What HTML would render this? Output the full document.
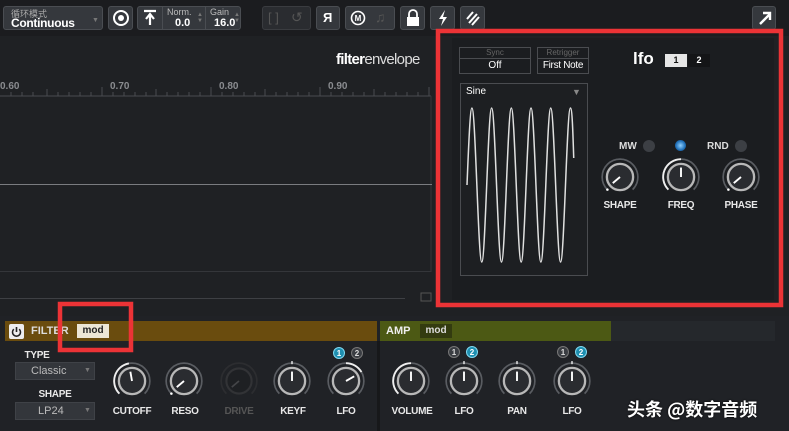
<!DOCTYPE html>
<html><head><meta charset="utf-8"><style>
*{box-sizing:border-box;margin:0;padding:0}
body{width:789px;height:431px;overflow:hidden;background:#1f2124;font-family:"Liberation Sans","Noto Sans CJK SC",sans-serif;position:relative;color:#ddd}
.a{position:absolute}
.tb{left:0;top:0;width:789px;height:36px;background:#1b1c1f}
.btn{position:absolute;top:6px;height:24px;background:#35383d;border:1px solid #4a4d52;border-radius:3px}
.dim{background:#2a2c30;border-color:#3a3c40}
.main{left:0;top:36px;width:789px;height:280px;background:#1f2124}
.lbl{font-weight:bold;font-size:10px;color:#e8e8e8;text-align:center;width:60px;letter-spacing:-0.3px}
.ax{font-size:10px;color:#8a8c90;font-weight:bold;top:81px}
</style></head><body>
<div class="a tb"></div>
<div class="btn" style="left:3px;width:100px">
 <div class="a" style="left:7px;top:0;font-size:9px;color:#aaa">循环模式</div>
 <div class="a" style="left:7px;top:9px;font-size:12px;font-weight:bold;color:#fff;letter-spacing:-0.3px">Continuous</div>
 <div class="a" style="left:88px;top:10px;font-size:7px;color:#777">▼</div>
</div>
<div class="btn" style="left:108px;width:25px"><svg class="a" style="left:3px;top:2px" width="18" height="18"><circle cx="9" cy="9" r="7" fill="none" stroke="#fff" stroke-width="2"/><circle cx="9" cy="9" r="3" fill="#fff"/></svg></div>
<div class="btn" style="left:137px;width:104px">
 <svg class="a" style="left:3px;top:2px" width="18" height="18"><path d="M3 2H15M9 16V6M5 10L9 5L13 10" stroke="#fff" stroke-width="2.2" fill="none"/></svg>
 <div class="a" style="left:24px;top:0;width:1px;height:22px;background:#4a4d52"></div>
 <div class="a" style="left:29px;top:0;font-size:9px;color:#bbb">Norm.</div>
 <div class="a" style="left:37px;top:10px;font-size:11px;font-weight:bold;color:#fff">0.0</div>
 <div class="a" style="left:59px;top:5px;font-size:6px;color:#777;line-height:6px">▲<br>▼</div>
 <div class="a" style="left:67px;top:0;width:1px;height:22px;background:#4a4d52"></div>
 <div class="a" style="left:72px;top:0;font-size:9px;color:#bbb">Gain</div>
 <div class="a" style="left:76px;top:10px;font-size:11px;font-weight:bold;color:#fff">16.0</div>
 <div class="a" style="left:96px;top:5px;font-size:6px;color:#777;line-height:6px">▲<br>▼</div>
</div>
<div class="btn dim" style="left:262px;width:49px"><div class="a" style="left:5px;top:3px;font-size:13px;color:#555">[ ]</div><div class="a" style="left:28px;top:2px;font-size:14px;color:#555">↺</div></div>
<div class="btn" style="left:316px;width:24px"><div class="a" style="left:6px;top:3px;font-size:13px;font-weight:bold;color:#fff">Я</div></div>
<div class="btn" style="left:345px;width:50px"><svg class="a" style="left:3px;top:2px" width="18" height="18"><circle cx="9" cy="9" r="6.5" fill="none" stroke="#fff" stroke-width="1.6"/><text x="9" y="12" font-size="8" font-weight="bold" fill="#fff" text-anchor="middle" font-family="Liberation Sans">M</text></svg><div class="a" style="left:29px;top:2px;font-size:14px;color:#555">♫</div></div>
<div class="btn" style="left:400px;width:25px"><svg class="a" style="left:4px;top:2px" width="16" height="18"><path d="M4 8V5a4 4 0 0 1 8 0v3" stroke="#fff" stroke-width="1.8" fill="none"/><rect x="2" y="8" width="12" height="9" fill="#fff"/></svg></div>
<div class="btn" style="left:430px;width:25px"><svg class="a" style="left:4px;top:2px" width="16" height="18"><path d="M10 1L4 10H8L6 17L12 8H8Z" fill="#fff"/></svg></div>
<div class="btn" style="left:460px;width:25px"><svg class="a" style="left:3px;top:2px" width="18" height="18"><path d="M3 10L9 3M5 14L13 5M8 16L15 8" stroke="#fff" stroke-width="2"/></svg></div>
<div class="btn" style="left:752px;width:24px"><svg class="a" style="left:3px;top:2px" width="18" height="18"><path d="M4 15L14 5M7 4H14V11" stroke="#fff" stroke-width="2.4" fill="none"/></svg></div>

<div class="a main"></div>
<div class="a" style="left:336px;top:51px;font-size:15px;color:#fff;letter-spacing:-0.7px"><b>filter</b><span style="color:#ddd">envelope</span></div>
<div class="a ax" style="left:0">0.60</div>
<div class="a ax" style="left:110px">0.70</div>
<div class="a ax" style="left:219px">0.80</div>
<div class="a ax" style="left:328px">0.90</div>
<svg class="a" style="left:0;top:85px" width="440" height="220">
 <g stroke="#4a4c50" stroke-width="1">
 <path d="M0 11H431 M47 4V11 M156 4V11 M265 4V11 M374 4V11 M102 2V11 M211 2V11 M320 2V11 M429 2V11"/>
 <path d="M11 7V11M22 7V11M33 7V11M58 7V11M69 7V11M80 7V11M91 7V11M113 7V11M124 7V11M135 7V11M146 7V11M167 7V11M178 7V11M189 7V11M200 7V11M222 7V11M233 7V11M244 7V11M255 7V11M276 7V11M287 7V11M298 7V11M309 7V11M331 7V11M342 7V11M353 7V11M364 7V11M385 7V11M396 7V11M407 7V11M418 7V11"/>
 <rect x="-1" y="11.5" width="432" height="175" fill="none" stroke="#34363a"/>
 <path d="M0 213.5H405" stroke="#3e4044"/>
 </g>
 <path d="M0 99.5H432" stroke="#7a7c80"/>
 <rect x="421" y="208" width="10" height="8" fill="none" stroke="#555"/>
</svg>

<div class="a" style="left:452px;top:38px;width:322px;height:262px;background:#1b1d20"></div>
<div class="a" style="left:459px;top:47px;width:72px;height:27px;border:1px solid #4a4c50;background:#1b1d20"><div style="height:11px;border-bottom:1px solid #4a4c50;font-size:8px;color:#666;text-align:center;line-height:10px">Sync</div><div style="font-size:10px;color:#fff;text-align:center;line-height:14px">Off</div></div>
<div class="a" style="left:537px;top:47px;width:52px;height:27px;border:1px solid #4a4c50;background:#1b1d20"><div style="height:11px;border-bottom:1px solid #4a4c50;font-size:8px;color:#666;text-align:center;line-height:10px">Retrigger</div><div style="font-size:10px;color:#fff;text-align:center;line-height:14px;white-space:nowrap;letter-spacing:-0.3px">First Note</div></div>
<div class="a" style="left:633px;top:49px;font-size:17px;font-weight:bold;color:#fff">lfo</div>
<div class="a" style="left:665px;top:54px;width:22px;height:13px;background:#e6e6e6;color:#111;font-size:9px;font-weight:bold;text-align:center;line-height:13px">1</div>
<div class="a" style="left:688px;top:54px;width:22px;height:13px;background:#141517;color:#fff;font-size:9px;font-weight:bold;text-align:center;line-height:13px">2</div>
<div class="a" style="left:460px;top:83px;width:128px;height:193px;border:1px solid #4a4c50;background:#1d1f22"></div>
<div class="a" style="left:466px;top:86px;font-size:10px;color:#fff">Sine</div>
<div class="a" style="left:572px;top:87px;font-size:9px;color:#888">▼</div>
<svg class="a" style="left:0;top:0" width="789" height="431">
<path fill="none" stroke="#e0e0e0" stroke-width="1.5" d="M467 185 c1.606 -39.4 3.142 -77 4.925 -77 c1.783 0 3.319 37.6 4.925 77 c1.606 39.4 3.142 77 4.925 77 c1.783 0 3.319 -37.6 4.925 -77 c1.606 -39.4 3.142 -77 4.925 -77 c1.783 0 3.319 37.6 4.925 77 c1.606 39.4 3.142 77 4.925 77 c1.783 0 3.319 -37.6 4.925 -77 c1.606 -39.4 3.142 -77 4.925 -77 c1.783 0 3.319 37.6 4.925 77 c1.606 39.4 3.142 77 4.925 77 c1.783 0 3.319 -37.6 4.925 -77 c1.606 -39.4 3.142 -77 4.925 -77 c1.783 0 3.319 37.6 4.925 77 c1.606 39.4 3.142 77 4.925 77 c1.783 0 3.319 -37.6 4.925 -77 c1.606 -39.4 3.142 -77 4.925 -77 c1.783 0 3.319 37.6 4.925 77 c1.606 39.4 3.142 77 4.925 77 c1.783 0 3.319 -37.6 4.925 -77 c1.606 -39.4 3.142 -77 4.925 -77 c1.783 0 2.5 25 3.3 50"/>
</svg>
<div class="a" style="left:619px;top:141px;font-size:10px;font-weight:bold;color:#ddd">MW</div>
<div class="a" style="left:643px;top:140px;width:12px;height:12px;border-radius:50%;background:#3c3f44"></div>
<div class="a" style="left:675px;top:140px;width:11px;height:11px;border-radius:50%;background:radial-gradient(#8fd0ff,#1f6fb8 60%,#1c3550)"></div>
<div class="a" style="left:707px;top:141px;font-size:10px;font-weight:bold;color:#ddd">RND</div>
<div class="a" style="left:735px;top:140px;width:12px;height:12px;border-radius:50%;background:#3c3f44"></div>
<div class="a lbl" style="left:590px;top:200px">SHAPE</div>
<div class="a lbl" style="left:651px;top:200px">FREQ</div>
<div class="a lbl" style="left:711px;top:200px">PHASE</div>

<div class="a" style="left:0;top:316px;width:789px;height:115px;background:#202226"></div>
<div class="a" style="left:5px;top:321px;width:372px;height:20px;background:#6a4c0e"></div>
<div class="a" style="left:9px;top:324px;width:15px;height:15px;background:#eee;border-radius:2px"><svg width="15" height="15"><path d="M4.8 5.2a4 4 0 1 0 5.4 0M7.5 3V8" stroke="#222" stroke-width="1.6" fill="none"/></svg></div>
<div class="a" style="left:31px;top:325px;font-size:11px;font-weight:bold;color:#ddd">FILTER</div>
<div class="a" style="left:77px;top:324px;width:32px;height:14px;background:#ece6d6;color:#222;font-size:10px;font-weight:bold;text-align:center;line-height:14px">mod</div>
<div class="a" style="left:380px;top:321px;width:231px;height:20px;background:#4c5914"></div>
<div class="a" style="left:611px;top:321px;width:164px;height:20px;background:#25282c"></div>
<div class="a" style="left:386px;top:325px;font-size:11px;font-weight:bold;color:#eee">AMP</div>
<div class="a" style="left:420px;top:324px;width:32px;height:14px;background:#333b10;color:#ddd;font-size:10px;font-weight:bold;text-align:center;line-height:14px">mod</div>
<div class="a" style="left:377px;top:341px;width:3px;height:90px;background:#17181a"></div>

<div class="a lbl" style="left:19px;top:350px;width:36px">TYPE</div>
<div class="a" style="left:15px;top:362px;width:80px;height:18px;background:#33363b;border:1px solid #3f4247;font-size:11px;color:#bbb;padding-left:15px;line-height:16px">Classic<span style="position:absolute;left:68px;font-size:7px;color:#777">▼</span></div>
<div class="a lbl" style="left:25px;top:389px;width:60px">SHAPE</div>
<div class="a" style="left:15px;top:402px;width:80px;height:18px;background:#33363b;border:1px solid #3f4247;font-size:11px;color:#bbb;padding-left:22px;line-height:16px">LP24<span style="position:absolute;left:68px;font-size:7px;color:#777">▼</span></div>

<div class="a lbl" style="left:102px;top:406px">CUTOFF</div>
<div class="a lbl" style="left:155px;top:406px">RESO</div>
<div class="a lbl" style="left:209px;top:406px;color:#555">DRIVE</div>
<div class="a lbl" style="left:263px;top:406px">KEYF</div>
<div class="a lbl" style="left:316px;top:406px">LFO</div>
<div class="a lbl" style="left:382px;top:406px">VOLUME</div>
<div class="a lbl" style="left:434px;top:406px">LFO</div>
<div class="a lbl" style="left:487px;top:406px">PAN</div>
<div class="a lbl" style="left:542px;top:406px">LFO</div>

<svg class="a" style="left:0;top:0" width="789" height="431" font-family="Liberation Sans">
<defs>
 <g id="kb"><path d="M7.98 32.02A17 17 0 1 1 32.02 32.02" fill="none" stroke="#5a5d62" stroke-width="1.6"/><circle cx="20" cy="20" r="12.5" fill="#2a2c30" stroke="#b8b8b8" stroke-width="2.2"/></g>
</defs>
<g font-size="8" font-weight="bold" text-anchor="middle">
 <circle cx="339" cy="353" r="5.5" fill="#1f8fb0" stroke="#7fd8f0"/><text x="339" y="356" fill="#fff">1</text>
 <circle cx="357" cy="353" r="5.5" fill="#3a3d42" stroke="#777"/><text x="357" y="356" fill="#ddd">2</text>
 <circle cx="454" cy="352" r="5.5" fill="#3a3d42" stroke="#777"/><text x="454" y="355" fill="#ddd">1</text>
 <circle cx="472" cy="352" r="5.5" fill="#1f8fb0" stroke="#7fd8f0"/><text x="472" y="355" fill="#fff">2</text>
 <circle cx="563" cy="352" r="5.5" fill="#3a3d42" stroke="#777"/><text x="563" y="355" fill="#ddd">1</text>
 <circle cx="581" cy="352" r="5.5" fill="#1f8fb0" stroke="#7fd8f0"/><text x="581" y="355" fill="#fff">2</text>
</g>
<g transform="translate(111,360) scale(1.05)"><use href="#kb"/><path d="M7.98 32.02A17 17 0 0 1 17.05 3.26" fill="none" stroke="#eee" stroke-width="1.8"/><path d="M20 20L18.44 11.14" stroke="#fff" stroke-width="1.8"/></g>
<g transform="translate(163,360) scale(1.05)"><use href="#kb"/><circle cx="8" cy="32" r="1.2" fill="#fff"/><path d="M20 20L13.1 25.8" stroke="#fff" stroke-width="1.8"/></g>
<g transform="translate(218,360) scale(1.05)" opacity="0.35"><path d="M7.98 32.02A17 17 0 1 1 32.02 32.02" fill="none" stroke="#444" stroke-width="1.6"/><circle cx="20" cy="20" r="12" fill="#1c1d20" stroke="#555" stroke-width="2"/><path d="M20 20L13.1 25.8" stroke="#888" stroke-width="1.6"/></g>
<g transform="translate(271,360) scale(1.05)"><use href="#kb"/><path d="M20 20L20 11" stroke="#fff" stroke-width="1.8"/><path d="M20 1V4" stroke="#fff" stroke-width="1.2"/></g>
<g transform="translate(325,360) scale(1.05)"><use href="#kb"/><path d="M20 3A17 17 0 0 1 34.72 11.5" fill="none" stroke="#eee" stroke-width="1.8"/><path d="M20 20L27.8 15.5" stroke="#fff" stroke-width="1.8"/></g>
<g transform="translate(390,360) scale(1.05)"><use href="#kb"/><path d="M7.98 32.02A17 17 0 0 1 20 3" fill="none" stroke="#eee" stroke-width="1.8"/><path d="M20 20L20 11" stroke="#fff" stroke-width="1.8"/></g>
<g transform="translate(443,360) scale(1.05)"><use href="#kb"/><path d="M20 20L20 11" stroke="#fff" stroke-width="1.8"/><path d="M20 1V4" stroke="#fff" stroke-width="1.2"/></g>
<g transform="translate(496,360) scale(1.05)"><use href="#kb"/><path d="M20 20L20 11" stroke="#fff" stroke-width="1.8"/><path d="M20 1V4" stroke="#fff" stroke-width="1.2"/></g>
<g transform="translate(551,360) scale(1.05)"><use href="#kb"/><path d="M20 20L20 11" stroke="#fff" stroke-width="1.8"/><path d="M20 1V4" stroke="#fff" stroke-width="1.2"/></g>
<g transform="translate(599,156) scale(1.05)"><use href="#kb"/><circle cx="8" cy="32" r="1.2" fill="#fff"/><path d="M20 20L13.1 25.8" stroke="#fff" stroke-width="1.8"/></g>
<g transform="translate(660,156) scale(1.05)"><use href="#kb"/><path d="M7.98 32.02A17 17 0 0 1 20 3" fill="none" stroke="#eee" stroke-width="1.8"/><path d="M20 20L20 11" stroke="#fff" stroke-width="1.8"/></g>
<g transform="translate(720,156) scale(1.05)"><use href="#kb"/><circle cx="8" cy="32" r="1.2" fill="#fff"/><path d="M20 20L13.1 25.8" stroke="#fff" stroke-width="1.8"/></g>
<rect x="438" y="31" width="343" height="274" fill="none" stroke="#ec3336" stroke-width="4.5"/>
<rect x="60" y="304" width="71" height="46" fill="none" stroke="#ec3336" stroke-width="4.5"/>
</svg>
<div class="a" style="left:627px;top:396px;font-size:18px;font-weight:bold;color:#fff;font-family:'Noto Sans CJK SC',sans-serif;text-shadow:0 0 2px #000">头条 @数字音频</div>
</body></html>
